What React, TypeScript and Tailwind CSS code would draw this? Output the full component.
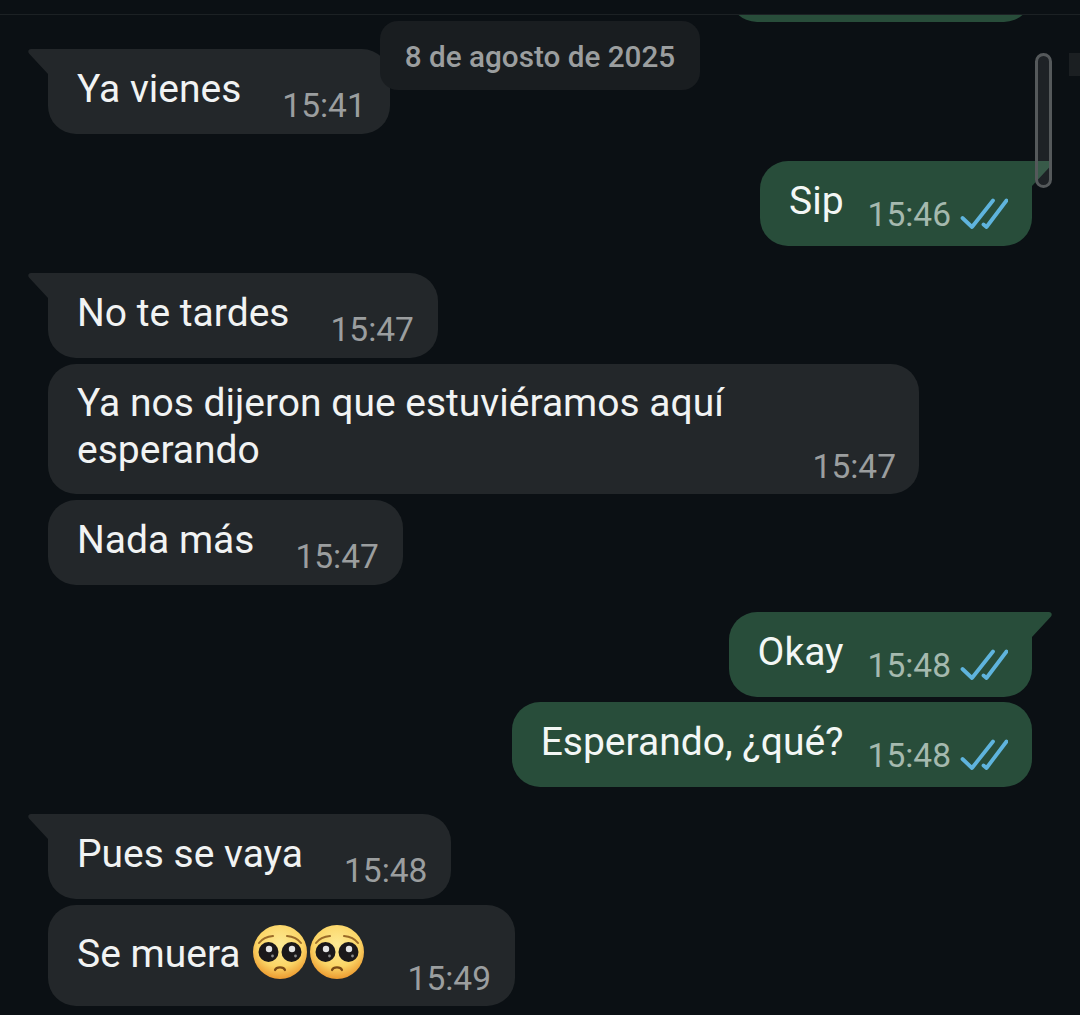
import React from 'react';

const DoubleCheck = () => (
  <svg width="48" height="32" viewBox="0 0 48 32" fill="none" className="shrink-0 mt-[37px] ml-[9px]">
    <path d="M2.5 20 L12 29 L33 2.5" stroke="#5fb4dd" strokeWidth="3.8" strokeLinecap="round" strokeLinejoin="round" />
    <path d="M23.5 26.5 L26.5 29 L46.5 2.5" stroke="#5fb4dd" strokeWidth="3.8" strokeLinecap="round" strokeLinejoin="round" />
  </svg>
);

const TailIn = () => (
  <svg width="24" height="28" viewBox="0 0 24 28" className="absolute left-[-20px] top-0">
    <path d="M24 0 H3 C0.5 0 -0.5 2.5 1 4.5 L20 25 V28 H24 Z" fill="#23272a" />
  </svg>
);

const TailOut = () => (
  <svg width="24" height="28" viewBox="0 0 24 28" className="absolute right-[-20px] top-0">
    <path d="M0 0 H21 C23.5 0 24.5 2.5 23 4.5 L4 25 V28 H0 Z" fill="#284d3a" />
  </svg>
);

const Received = ({ text, time, tail, extra = '' }: { text: string; time: string; tail?: boolean; extra?: string }) => (
  <div className={`relative self-start flex rounded-[28px] bg-[#23272a] pl-[29px] pr-[24px] pb-[9px] ${tail ? 'rounded-tl-none' : ''} ${extra}`}>
    {tail && <TailIn />}
    <p className="mt-[17px] mr-[41px] text-[39px] leading-[47px] text-[#f1f3f3] whitespace-nowrap">{text}</p>
    <span className="mt-[38px] text-[33.5px] leading-[38px] text-[#9b9e9f]">{time}</span>
  </div>
);

const Sent = ({ text, time, tail, extra = '' }: { text: string; time: string; tail?: boolean; extra?: string }) => (
  <div className={`relative self-end flex rounded-[28px] bg-[#284d3a] pl-[29px] pr-[24px] pb-[12px] ${tail ? 'rounded-tr-none' : ''} ${extra}`}>
    {tail && <TailOut />}
    <p className="mt-[17px] mr-[24px] text-[39px] leading-[47px] text-[#f3f7f5] whitespace-nowrap">{text}</p>
    <span className="mt-[35px] text-[33.5px] leading-[38px] text-[#a5b9ae]">{time}</span>
    <DoubleCheck />
  </div>
);

const PleadingFace = ({ id }: { id: string }) => (
  <svg width="56" height="56" viewBox="0 0 56 56" className="shrink-0">
    <defs>
      <radialGradient id={id} cx="50%" cy="36%" r="64%">
        <stop offset="0%" stopColor="#fdea94" />
        <stop offset="65%" stopColor="#fbd566" />
        <stop offset="100%" stopColor="#ec9a30" />
      </radialGradient>
    </defs>
    <circle cx="28" cy="28" r="27" fill={`url(#${id})`} />
    <path d="M7 19 C10 15 15 12.5 21 12" stroke="#9a6a28" strokeWidth="2" fill="none" strokeLinecap="round" />
    <path d="M49 19 C46 15 41 12.5 35 12" stroke="#9a6a28" strokeWidth="2" fill="none" strokeLinecap="round" />
    <circle cx="16.5" cy="28" r="10" fill="#1b181a" />
    <circle cx="39.5" cy="28" r="10" fill="#1b181a" />
    <circle cx="17" cy="25" r="3.2" fill="#e4e4e4" />
    <circle cx="40" cy="25" r="3.2" fill="#e4e4e4" />
    <circle cx="20.5" cy="32" r="1.4" fill="#8a8a8a" />
    <circle cx="43.5" cy="32" r="1.4" fill="#8a8a8a" />
    <path d="M23 46 C24.5 42.5 31.5 42.5 33 46" stroke="#7a4a16" strokeWidth="2.2" fill="none" strokeLinecap="round" />
  </svg>
);

export default function App() {
  return (
    <div className="relative h-[1015px] w-[1080px] overflow-hidden bg-[#0b1014] font-['Roboto',sans-serif]">
      {/* barra superior */}
      <div className="h-[15px] border-b border-[#1c2124]" />

      <div className="flex flex-col pl-[48px] pr-[48px]">
        {/* burbuja anterior, cortada */}
        <div className="self-end h-[7px] w-[303px] overflow-hidden">
          <div className="-mt-[78px] h-[85px] rounded-[28px] bg-[#284d3a]" />
        </div>

        <Received text="Ya vienes" time="15:41" tail extra="mt-[27px]" />
        <Sent text="Sip" time="15:46" tail extra="mt-[27px]" />

        <Received text="No te tardes" time="15:47" tail extra="mt-[27px]" />
        <div className="mt-[6px] flex h-[130px] w-[871px] justify-between rounded-[28px] bg-[#23272a] pl-[29px] pr-[23px]">
          <p className="mt-[16px] w-[700px] text-[39px] leading-[47px] text-[#f1f3f3]">Ya nos dijeron que estuviéramos aquí esperando</p>
          <span className="mt-[84px] text-[33.5px] leading-[38px] text-[#9b9e9f]">15:47</span>
        </div>
        <Received text="Nada más" time="15:47" extra="mt-[6px]" />

        <Sent text="Okay" time="15:48" tail extra="mt-[27px]" />
        <Sent text="Esperando, ¿qué?" time="15:48" extra="mt-[5px]" />

        <Received text="Pues se vaya" time="15:48" tail extra="mt-[27px]" />
        <div className="mt-[6px] flex h-[101px] self-start rounded-[28px] bg-[#23272a] pl-[29px] pr-[24px]">
          <p className="mt-[26px] text-[39px] leading-[47px] text-[#f1f3f3] whitespace-nowrap">Se muera</p>
          <div className="ml-[11px] mt-[19px] flex gap-[1px] self-start">
            <PleadingFace id="cara-a" />
            <PleadingFace id="cara-b" />
          </div>
          <span className="ml-[43px] mt-[55px] text-[33.5px] leading-[38px] text-[#9b9e9f]">15:49</span>
        </div>
      </div>

      {/* fecha flotante */}
      <div className="absolute left-[380px] top-[21px] flex h-[69px] w-[320px] items-center justify-center rounded-[18px] bg-[#191d20] pt-[3px] text-[29.7px] font-medium text-[#9b9e9f]">
        8 de agosto de 2025
      </div>

      {/* barra de desplazamiento */}
      <div className="absolute left-[1035px] top-[53px] h-[135px] w-[17px] rounded-full border-[3px] border-[#55595b] bg-[#ffffff14]" />
      <div className="absolute left-[1069px] top-[53px] h-[23px] w-[11px] bg-[#1b1f22]" />
    </div>
  );
}
